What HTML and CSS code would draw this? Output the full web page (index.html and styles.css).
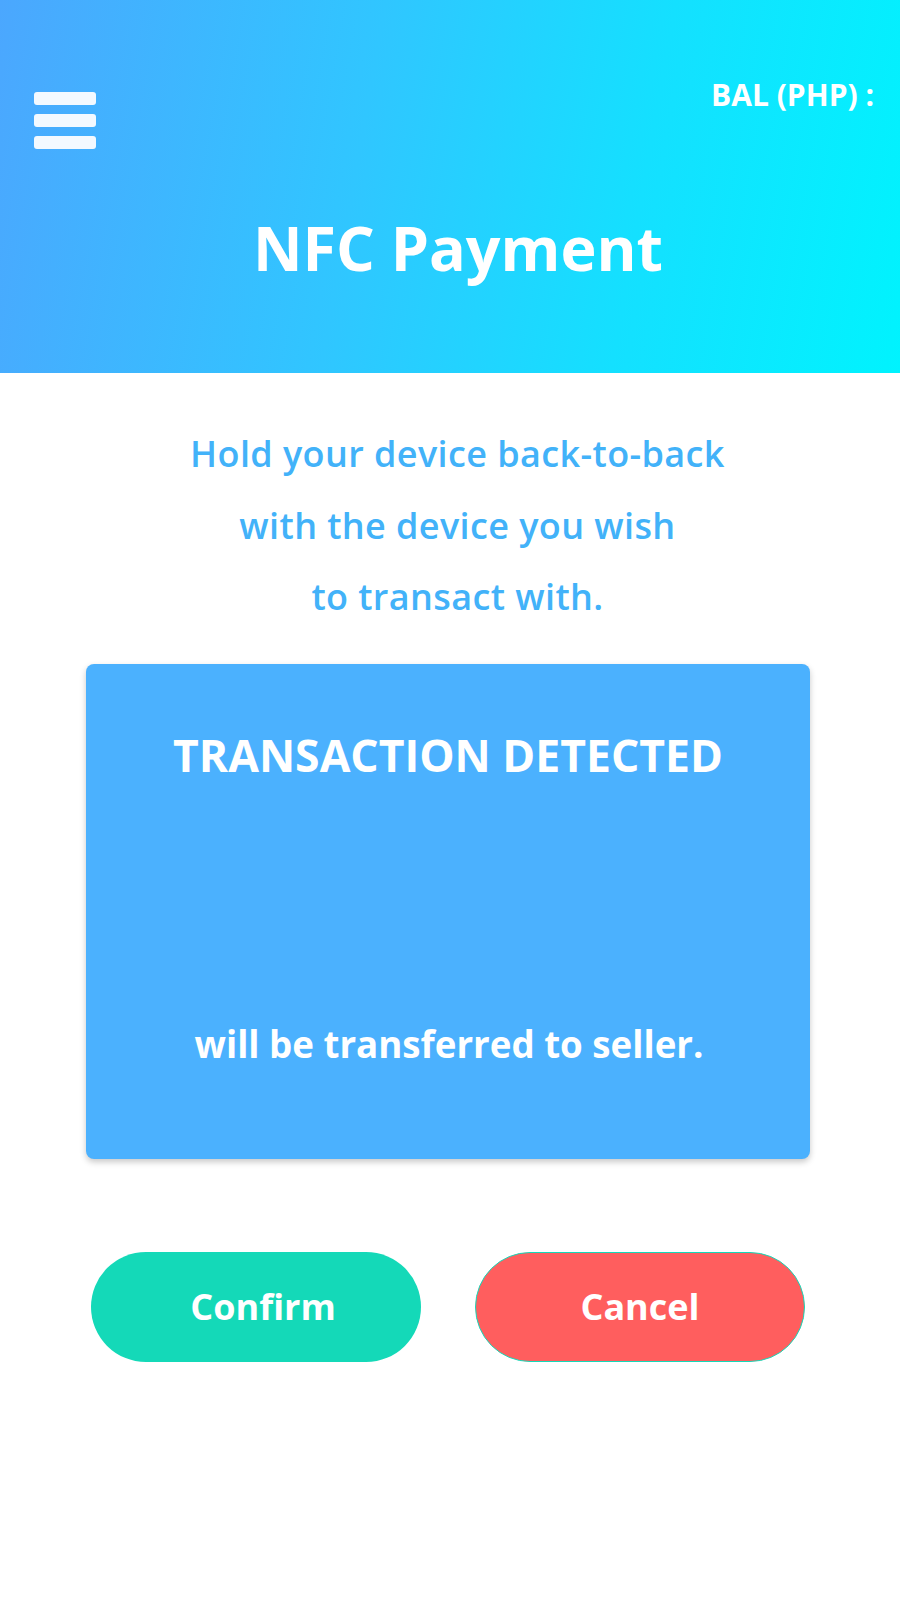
FILE: index.html
```html
<!DOCTYPE html>
<html lang="en">
<head>
<meta charset="utf-8">
<title>NFC Payment</title>
<link rel="stylesheet" href="styles.css">
</head>
<body>
<header class="header">
  <div class="topbar">
    <div class="menu" aria-label="Menu">
      <span class="bar"></span>
      <span class="bar"></span>
      <span class="bar"></span>
    </div>
    <div class="balance">BAL (PHP) :</div>
  </div>
  <h1 class="title">NFC Payment</h1>
</header>
<main class="content">
  <p class="instructions">Hold your device back-to-back<br>with the device you wish<br>to transact with.</p>
  <section class="card">
    <h2 class="card-title">TRANSACTION DETECTED</h2>
    <p class="card-text">will be transferred to seller.</p>
  </section>
  <div class="actions">
    <button class="btn btn-confirm">Confirm</button>
    <button class="btn btn-cancel">Cancel</button>
  </div>
</main>
</body>
</html>
```

FILE: styles.css
```css
* { box-sizing: border-box; }
html, body { margin: 0; padding: 0; background: #ffffff; }
body { font-family: "Open Sans", "Noto Sans", sans-serif; }

.header {
  height: 373px;
  background: linear-gradient(100deg, #4ba7fe 0%, #30c6ff 40%, #14e0ff 70%, #00f3fe 100%);
  padding: 92px 26px 0 34px;
  display: flex;
  flex-direction: column;
}
.topbar {
  display: flex;
  justify-content: space-between;
  align-items: flex-start;
}
.menu {
  display: flex;
  flex-direction: column;
  gap: 9px;
  width: 62px;
}
.bar {
  display: block;
  height: 13px;
  border-radius: 3px;
  background: #f3f9ff;
}
.balance {
  color: #ffffff;
  font-weight: 700;
  font-size: 30px;
  line-height: 1;
  margin-top: -12px;
}
.title {
  margin: 62px 0 0 8px;
  text-align: center;
  color: #ffffff;
  font-weight: 700;
  font-size: 61px;
  line-height: 1.2;
}

.content {
  display: flex;
  flex-direction: column;
  align-items: center;
}
.instructions {
  margin: 45px 0 0 15px;
  text-align: center;
  color: #42b2f9;
  font-weight: 600;
  font-size: 36px;
  letter-spacing: 0.4px;
  line-height: 71.5px;
}
.card {
  margin-top: 31px;
  margin-left: -4px;
  width: 724px;
  height: 495px;
  background: #4bb1fe;
  border-radius: 8px;
  box-shadow: 0 3px 6px rgba(0, 0, 0, 0.22);
  padding: 64px 20px 92px;
  display: flex;
  flex-direction: column;
  justify-content: space-between;
  align-items: center;
}
.card-title {
  margin: 0;
  color: #ffffff;
  font-weight: 700;
  font-size: 44.5px;
  line-height: 1.2;
}
.card-text {
  margin: 0 0 0 2px;
  color: #ffffff;
  font-weight: 700;
  font-size: 36.7px;
  line-height: 1.2;
}
.actions {
  margin-top: 93px;
  margin-left: -4px;
  display: flex;
  gap: 54px;
}
.btn {
  width: 330px;
  height: 110px;
  border-radius: 55px;
  border: none;
  color: #ffffff;
  font-family: "Open Sans", "Noto Sans", sans-serif;
  font-weight: 700;
  font-size: 36px;
  display: flex;
  align-items: center;
  justify-content: center;
  padding: 0;
}
.btn-confirm { background: #14d9b8; padding-left: 14px; }
.btn-cancel { background: #ff5e5e; border: 1.5px solid #14d9b8; }
```
